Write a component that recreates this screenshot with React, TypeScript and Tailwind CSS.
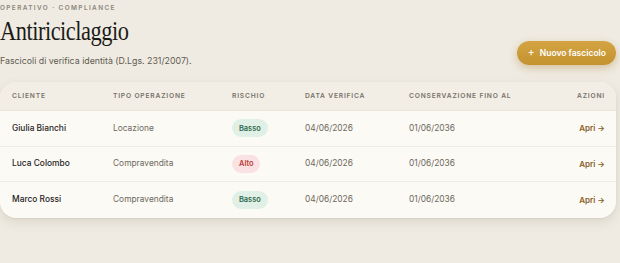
import React from "react";

type Row = { name: string; tipo: string; rischio: "Basso" | "Alto"; data: string; cons: string };

const rows: Row[] = [
  { name: "Giulia Bianchi", tipo: "Locazione", rischio: "Basso", data: "04/06/2026", cons: "01/06/2036" },
  { name: "Luca Colombo", tipo: "Compravendita", rischio: "Alto", data: "04/06/2026", cons: "01/06/2036" },
  { name: "Marco Rossi", tipo: "Compravendita", rischio: "Basso", data: "04/06/2026", cons: "01/06/2036" },
];

const cols = "grid grid-cols-[101px_119px_73px_104px_1fr_auto] items-center pl-[12px] pr-[11px]";

export default function App() {
  return (
    <div className="w-[620px] h-[263px] bg-[#efebe2] overflow-hidden font-['Inter',sans-serif] pr-[4px]">
      <div className="flex items-start justify-between">
        <div>
          <div className="pt-[4px] text-[6.4px] leading-[9px] tracking-[0.22em] font-semibold text-[#8a857a]">
            OPERATIVO · COMPLIANCE
          </div>
          <h1 className="mt-[3px] h-[30px] font-['Liberation_Serif',serif] text-[28px] leading-[30px] text-[#1c1b18] tracking-[-0.6px] scale-x-[0.8] origin-left whitespace-nowrap">
            Antiriciclaggio
          </h1>
          <p className="mt-[9px] text-[8.8px] leading-[11px] text-[#5f5b52]">
            Fascicoli di verifica identità (D.Lgs. 231/2007).
          </p>
        </div>
        <button className="mt-[41px] h-[24px] pl-[10px] pr-[10px] rounded-full bg-gradient-to-b from-[#d4a444] to-[#c4922f] text-white text-[8.5px] font-semibold flex items-center gap-[5px] shadow-[0_3px_8px_rgba(160,115,30,0.35)]">
          <span className="text-[11px] leading-none font-normal -mt-[1px]">+</span>
          Nuovo fascicolo
        </button>
      </div>

      <div className="mt-[16px] rounded-[16px] bg-[#fcfaf5] overflow-hidden shadow-[0_4px_12px_rgba(90,75,40,0.12),0_1px_2px_rgba(90,75,40,0.08)]">
        <div className={`${cols} h-[29px] bg-[#f2eee5] border-b border-[#e8e3d8] text-[6.7px] font-semibold tracking-[0.12em] text-[#77726a]`}>
          <div>CLIENTE</div>
          <div>TIPO OPERAZIONE</div>
          <div>RISCHIO</div>
          <div>DATA VERIFICA</div>
          <div>CONSERVAZIONE FINO AL</div>
          <div className="text-right">AZIONI</div>
        </div>
        {rows.map((r, i) => (
          <div
            key={r.name}
            className={`${cols} h-[35.5px] text-[8.4px] ${i < rows.length - 1 ? "border-b border-[#efebe2]" : ""}`}
          >
            <div className="font-medium text-[#26241f]">{r.name}</div>
            <div className="text-[#6d6960]">{r.tipo}</div>
            <div>
              {r.rischio === "Basso" ? (
                <span className="inline-flex items-center h-[18px] px-[7px] rounded-full bg-[#e1f0e6] text-[#2f6a4c] text-[7.4px] font-semibold">
                  Basso
                </span>
              ) : (
                <span className="inline-flex items-center h-[18px] px-[7px] rounded-full bg-[#fbe2e2] text-[#b83c3c] text-[7.4px] font-semibold">
                  Alto
                </span>
              )}
            </div>
            <div className="text-[#6d6960]">{r.data}</div>
            <div className="text-[#6d6960]">{r.cons}</div>
            <div className="text-right text-[8px] font-semibold text-[#86601f]">Apri →</div>
          </div>
        ))}
      </div>
    </div>
  );
}
